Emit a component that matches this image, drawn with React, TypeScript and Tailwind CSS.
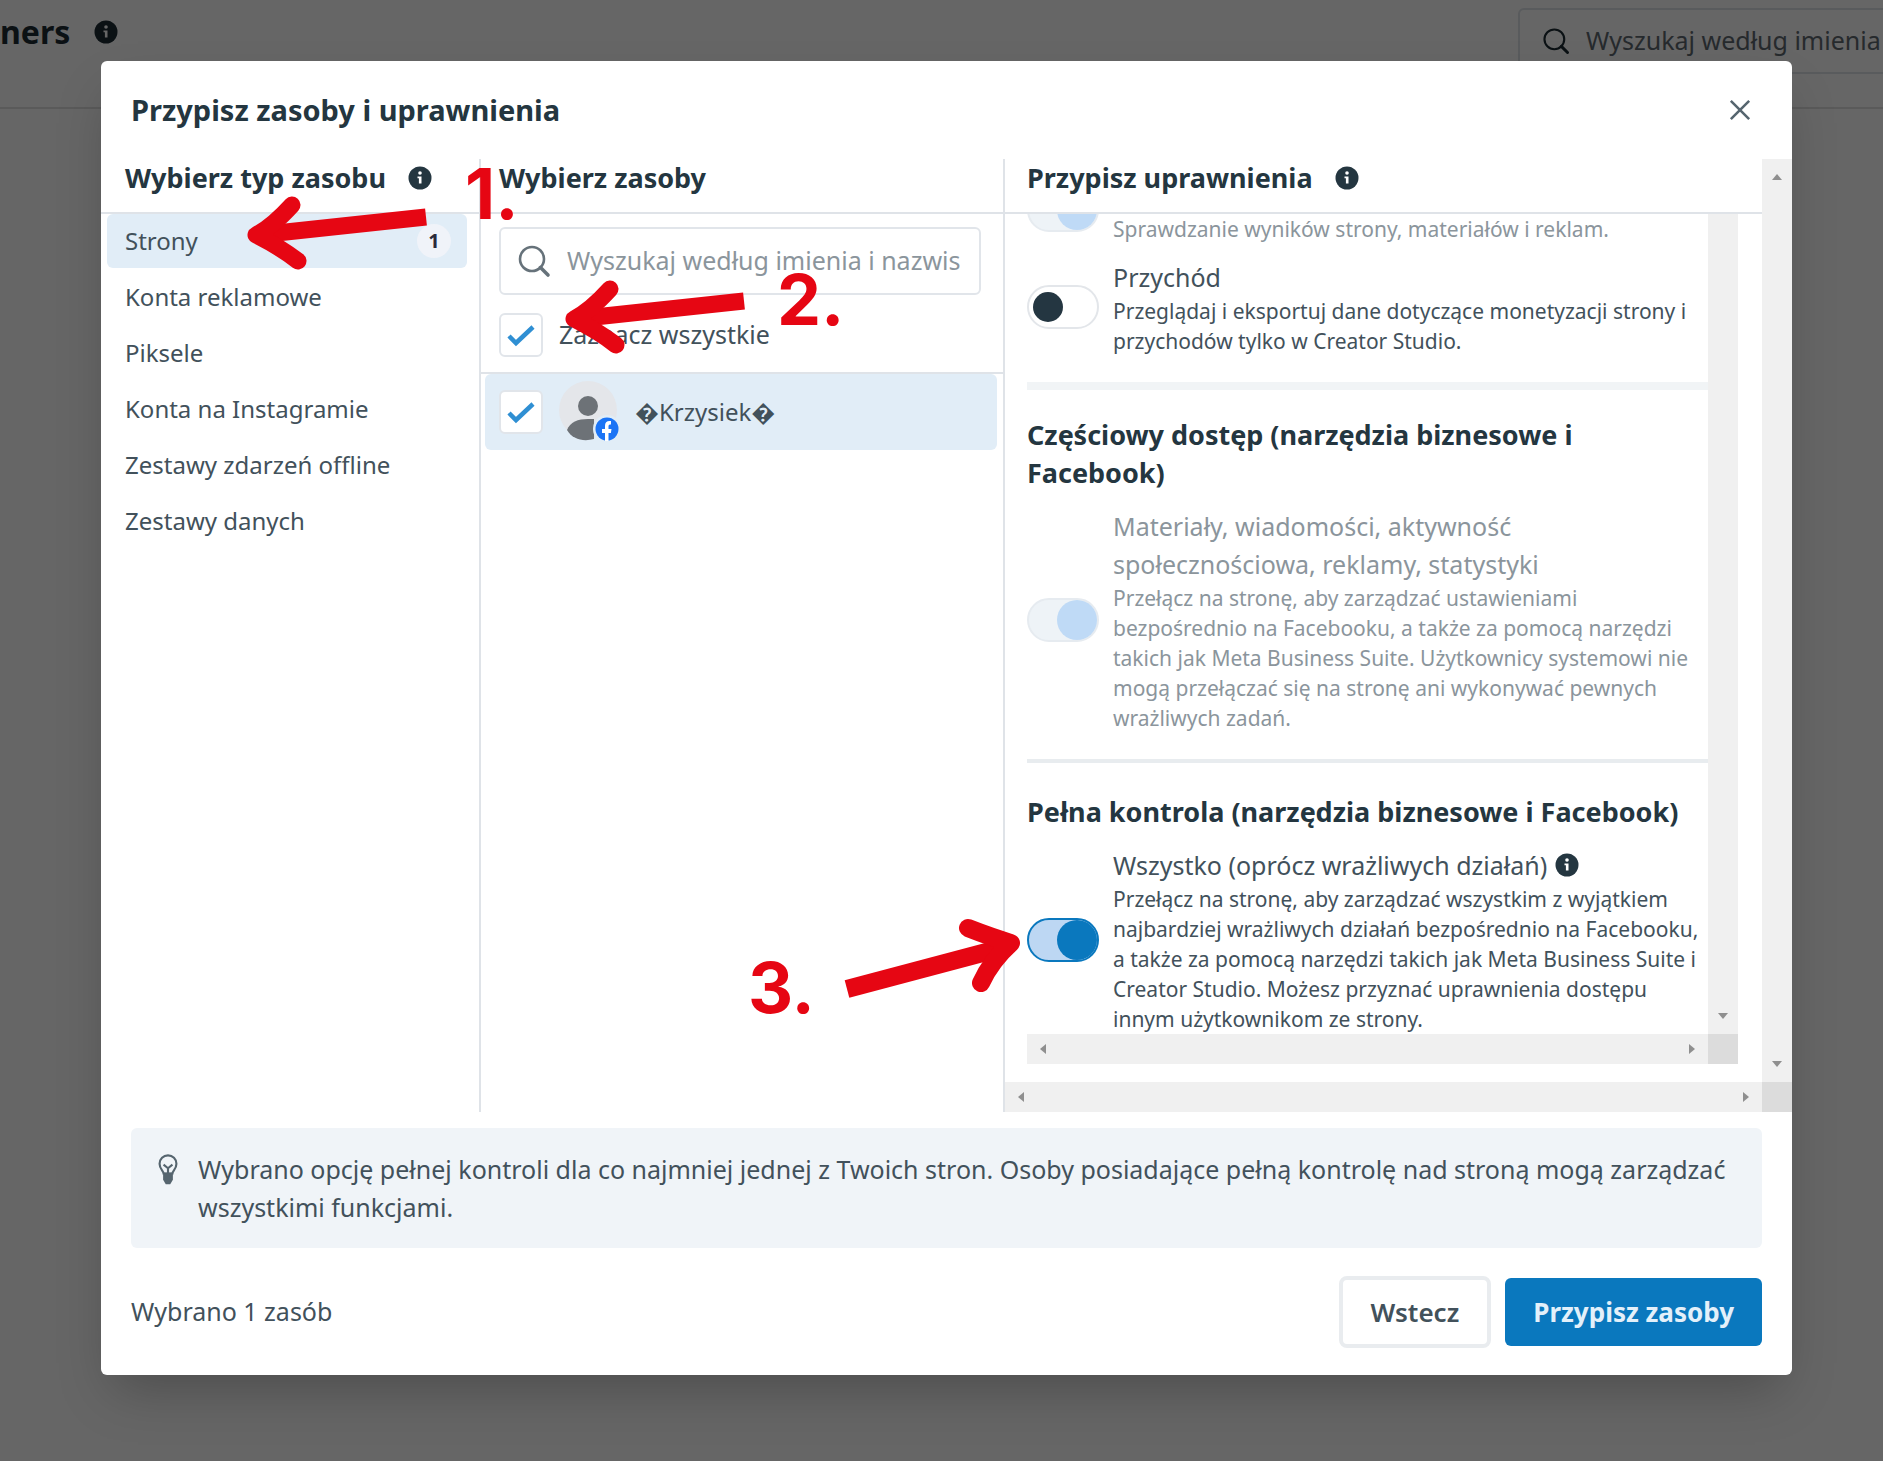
import { useState } from 'react';
import type { ReactNode } from 'react';
import clsx from 'clsx';

const assetTypes = [
  { name: 'Strony', count: 1 },
  { name: 'Konta reklamowe' },
  { name: 'Piksele' },
  { name: 'Konta na Instagramie' },
  { name: 'Zestawy zdarzeń offline' },
  { name: 'Zestawy danych' },
];

function InfoIcon({ className }: { className?: string }) {
  return (
    <svg viewBox="0 0 24 24" className={clsx('h-6 w-6 shrink-0', className)} aria-hidden="true">
      <circle cx="12" cy="12" r="11.5" fill="currentColor" />
      <circle cx="12" cy="7" r="1.8" fill="#fff" />
      <path d="M9.5 10.5h4v7h-2.6v-5.2H9.500z" fill="#fff" />
    </svg>
  );
}

function SearchIcon({ className }: { className?: string }) {
  return (
    <svg viewBox="0 0 34 34" className={className} fill="none" stroke="currentColor" aria-hidden="true">
      <circle cx="15" cy="15" r="12" strokeWidth="2.600" />
      <path d="M23.500 23.500 31 31" strokeWidth="3.600" strokeLinecap="round" />
    </svg>
  );
}

function BulbIcon() {
  return (
    <svg viewBox="0 0 24 36" className="mt-1 h-8 w-6 shrink-0 text-[#56656f]" fill="none" aria-hidden="true">
      <path
        d="M7 22c0-3-4.500-5-4.500-11a9.500 9.500 0 0 1 19 0c0 6-4.500 8-4.500 11z"
        stroke="currentColor"
        strokeWidth="2.400"
      />
      <path d="M7 12l5 4 5-4M12 16v6" stroke="currentColor" strokeWidth="2.400" />
      <path d="M6.500 21h11v8l-3 5h-5l-3-5z" fill="currentColor" />
    </svg>
  );
}

function Avatar() {
  return (
    <svg viewBox="0 0 60 64" className="h-16 w-[60px] shrink-0" aria-hidden="true">
      <circle cx="29" cy="30" r="29" fill="#e4e6ea" />
      <circle cx="29" cy="26" r="10" fill="#6d7277" />
      <path d="M8 50c3-8 11-11 21-11h6v20c-11 3-22 0-27-9z" fill="#6d7277" />
      <circle cx="48" cy="49" r="14" fill="#e1edf7" />
      <circle cx="48" cy="49" r="11.500" fill="#1b74f5" />
      <path
        d="M46 61v-8h-3v-4h3v-3c0-4 2-5.500 6-5v3.500c-2 0-2.500.5-2.500 2V49h3l-.6 4h-2.400v8z"
        fill="#fff"
      />
    </svg>
  );
}

type CheckBoxProps = { id: string; label?: string };

function CheckBox({ id, label }: CheckBoxProps) {
  const [checked, setChecked] = useState(true);
  return (
    <span className="relative flex h-11 w-11 shrink-0">
      <input
        id={id}
        type="checkbox"
        checked={checked}
        aria-label={label}
        onChange={() => setChecked(!checked)}
        className="h-11 w-11 appearance-none rounded-md border-2 border-[#e1e5ea] bg-white"
      />
      {checked && (
        <svg viewBox="0 0 44 44" className="pointer-events-none absolute inset-0" fill="none">
          <path d="M10 23l7 7 17-16" stroke="#2f8fd3" strokeWidth="4.500" />
        </svg>
      )}
    </span>
  );
}

type PermissionProps = {
  title?: ReactNode;
  label: string;
  on?: boolean;
  disabled?: boolean;
  children: ReactNode;
};

function Permission({ title, label, on = false, disabled = false, children }: PermissionProps) {
  const [enabled, setEnabled] = useState(on);
  return (
    <div className="flex shrink-0 items-center gap-[14px]">
      <button
        type="button"
        role="switch"
        aria-checked={enabled}
        aria-label={label}
        disabled={disabled}
        onClick={() => setEnabled(!enabled)}
        className={clsx(
          'flex h-11 w-[72px] shrink-0 items-center rounded-full border-2',
          enabled && 'justify-end',
          !enabled && 'border-[#e3e6ea] bg-white px-1',
          enabled && disabled && 'border-[#e6ebf0] bg-[#eef3f7]',
          enabled && !disabled && 'border-[#0a78be] bg-[#bdd7f3]'
        )}>
        <span
          className={clsx(
            'rounded-full',
            !enabled && 'h-[30px] w-[30px] bg-[#243641]',
            enabled && 'h-10 w-10',
            enabled && disabled && 'bg-[#bfdaf6]',
            enabled && !disabled && 'bg-[#0a78be]'
          )}
        />
      </button>
      <div className={clsx('min-w-0', disabled ? 'text-[#8b959c]' : 'text-[#42515b]')}>
        <div className="min-h-[38px] leading-[38px]">{title}</div>
        <p className="text-[21px] leading-[30px]">{children}</p>
      </div>
    </div>
  );
}

const arrowRotation = {
  up: '',
  right: 'rotate-90',
  down: 'rotate-180',
  left: '-rotate-90',
};

function ScrollArrow({ direction }: { direction: keyof typeof arrowRotation }) {
  return (
    <svg viewBox="0 0 12 12" className={clsx('h-3 w-3', arrowRotation[direction])} aria-hidden="true">
      <path d="M6 3l5 6H1z" fill="#8f8f8f" />
    </svg>
  );
}

function VerticalBar({ withTop = false }: { withTop?: boolean }) {
  return (
    <div className="flex w-[30px] shrink-0 flex-col items-center justify-between bg-[#f0f0f0] py-3">
      <span>{withTop && <ScrollArrow direction="up" />}</span>
      <ScrollArrow direction="down" />
    </div>
  );
}

function HorizontalBar() {
  return (
    <div className="flex h-[30px] shrink-0">
      <div className="flex flex-1 items-center justify-between bg-[#f0f0f0] px-[10px]">
        <ScrollArrow direction="left" />
        <ScrollArrow direction="right" />
      </div>
      <div className="w-[30px] bg-[#dcdcdc]" />
    </div>
  );
}

// Hand-drawn style arrow, pointing left
function LeftArrow({ className }: { className?: string }) {
  return (
    <svg
      viewBox="0 0 190 80"
      className={clsx('pointer-events-none absolute z-20 h-20 w-[190px]', className)}
      fill="none"
      stroke="#e60613"
      strokeWidth="17"
      aria-hidden="true">
      <path d="M184 26 16 44" />
      <path d="M50 14Q30 36 14 44 38 56 56 70" strokeLinecap="round" strokeLinejoin="round" />
    </svg>
  );
}

function StepNumber({ className, children }: { className?: string; children: ReactNode }) {
  return (
    <span
      className={clsx(
        "pointer-events-none absolute z-20 font-['Inter',sans-serif] text-[70px] leading-[70px] font-bold text-[#e60613]",
        className
      )}>
      {children}
    </span>
  );
}

function ColumnHeader({ title, info = false, className }: { title: string; info?: boolean; className?: string }) {
  return (
    <div
      className={clsx(
        'flex h-[55px] shrink-0 items-center gap-[22px] border-b-2 border-[#dfe3e8] pb-4 text-[#243640]',
        className
      )}>
      <h2 className="text-[27px] leading-[38px] font-bold whitespace-nowrap">{title}</h2>
      {info && <InfoIcon />}
    </div>
  );
}

export default function App() {
  const [activeType, setActiveType] = useState('Strony');

  return (
    <div className="relative min-h-screen bg-white font-['Noto_Sans',sans-serif] text-[25px]">
      {/* Page behind the dialog */}
      <header className="flex h-[109px] items-start justify-between overflow-hidden border-b-2 border-[#e2e2e2]">
        <div className="flex items-center gap-6 pt-3 text-[#1c2b33]">
          <h1 className="text-[32px] leading-10 font-bold">ners</h1>
          <InfoIcon />
        </div>
        <div className="mt-2 -mr-[127px] flex h-[66px] items-center gap-4 rounded-md border-2 border-[#dfe3e8] px-[22px]">
          <SearchIcon className="h-7 w-7 text-[#1c2b33]" />
          <input
            type="text"
            aria-label="Wyszukaj"
            placeholder="Wyszukaj według imienia"
            className="w-[400px] placeholder:text-[#5f6a72]"
          />
        </div>
      </header>

      <div className="absolute inset-0 bg-black/60 pt-[61px] pr-[91px] pl-[101px]">
        <div
          role="dialog"
          aria-modal="true"
          aria-labelledby="dialog-title"
          className="rounded-md bg-white text-[#42515b] shadow-2xl">
          <div className="flex h-[98px] items-center justify-between pr-10 pl-[30px]">
            <h1 id="dialog-title" className="text-[29px] font-bold text-[#243640]">
              Przypisz zasoby i uprawnienia
            </h1>
            <button type="button" aria-label="Zamknij" className="p-px">
              <svg viewBox="0 0 24 24" className="h-[22px] w-[22px]" fill="none" stroke="#56656f" strokeWidth="2.800">
                <path d="M2 2l20 20M22 2 2 22" />
              </svg>
            </button>
          </div>

          <div className="flex">
            {/* Asset types */}
            <section className="relative flex w-[380px] shrink-0 flex-col border-r-2 border-[#dfe3e8]">
              <ColumnHeader title="Wybierz typ zasobu" info className="pl-6" />
              <nav className="flex flex-col gap-[2px] pr-3 pl-[6px] text-2xl">
                {assetTypes.map((type) => (
                  <button
                    key={type.name}
                    type="button"
                    onClick={() => setActiveType(type.name)}
                    className={clsx(
                      'flex h-[54px] items-center justify-between rounded-md pr-4 pl-[18px] text-left',
                      activeType === type.name && 'bg-[#e1edf7]'
                    )}>
                    {type.name}
                    {type.count && (
                      <span className="flex h-[34px] w-[34px] items-center justify-center rounded-full bg-[#f0f3f9] text-xl font-bold text-[#2b2b3b]">
                        {type.count}
                      </span>
                    )}
                  </button>
                ))}
              </nav>
              <LeftArrow className="top-8 left-[141px]" />
              <StepNumber className="top-0 left-[364px]">1.</StepNumber>
            </section>

            {/* Assets */}
            <section className="relative flex w-[524px] shrink-0 flex-col border-r-2 border-[#dfe3e8]">
              <ColumnHeader title="Wybierz zasoby" className="pl-[18px]" />
              <div className="border-b-2 border-[#dfe3e8] pt-[13px] pr-[22px] pb-[15px] pl-[18px]">
                <label className="flex h-[68px] items-center gap-4 rounded-md border-2 border-[#e1e5ea] px-4">
                  <SearchIcon className="h-[34px] w-[34px] shrink-0 text-[#66727a]" />
                  <input
                    type="text"
                    aria-label="Wyszukaj zasoby"
                    placeholder="Wyszukaj według imienia i nazwis"
                    className="min-w-0 flex-1 placeholder:text-[#8b959c]"
                  />
                </label>
                <div className="flex items-center gap-4 pt-[18px]">
                  <CheckBox id="select-all" />
                  <label htmlFor="select-all">Zaznacz wszystkie</label>
                </div>
              </div>
              <div className="mr-[6px] ml-1 flex h-[76px] items-center gap-4 rounded-md bg-[#e1edf7] px-[14px]">
                <CheckBox id="asset-1" label="Krzysiek" />
                <Avatar />
                <label htmlFor="asset-1" className="text-2xl">
                  {'\uFFFDKrzysiek\uFFFD'}
                </label>
              </div>
              <LeftArrow className="top-[116px] left-[79px]" />
              <StepNumber className="top-[106px] left-[296px]">2.</StepNumber>
              <StepNumber className="top-[794px] right-[188px]">3.</StepNumber>
              <svg
                viewBox="0 0 190 90"
                className="pointer-events-none absolute top-[752px] -right-6 z-20 h-[90px] w-[190px]"
                fill="none"
                stroke="#e60613"
                strokeWidth="18"
                aria-hidden="true">
                <path d="M10 78 172 35" />
                <path d="M131 17Q154 26 174 32 154 50 144 72" strokeLinecap="round" strokeLinejoin="round" />
              </svg>
            </section>

            {/* Permissions */}
            <section className="flex min-w-0 flex-1 flex-col">
              <div className="flex">
                <div className="min-w-0 flex-1">
                  <ColumnHeader title="Przypisz uprawnienia" info className="pl-[22px]" />
                  <div className="pr-6 pb-[18px] pl-[22px]">
                    <div className="flex h-[820px]">
                      <div className="flex min-w-0 flex-1 flex-col justify-end overflow-hidden">
                        <Permission label="Statystyki" on disabled>
                          Sprawdzanie wyników strony, materiałów i reklam.
                        </Permission>
                        <div className="h-[14px] shrink-0" />
                        <Permission title="Przychód" label="Przychód">
                          Przeglądaj i eksportuj dane dotyczące monetyzacji strony i przychodów tylko w Creator
                          Studio.
                        </Permission>
                        <hr className="my-[26px] h-2 shrink-0 border-0 bg-[#f1f4f6]" />
                        <h3 className="mb-[15px] text-[27px] leading-[38px] font-bold text-[#243640]">
                          Częściowy dostęp (narzędzia biznesowe i Facebook)
                        </h3>
                        <Permission
                          title="Materiały, wiadomości, aktywność społecznościowa, reklamy, statystyki"
                          label="Częściowy dostęp"
                          on
                          disabled>
                          Przełącz na stronę, aby zarządzać ustawieniami bezpośrednio na Facebooku, a także za
                          pomocą narzędzi takich jak Meta Business Suite. Użytkownicy systemowi nie mogą
                          przełączać się na stronę ani wykonywać pewnych wrażliwych zadań.
                        </Permission>
                        <hr className="mt-[26px] mb-[30px] h-1 shrink-0 border-0 bg-[#e8ecef]" />
                        <h3 className="mb-[15px] text-[27px] leading-[38px] font-bold text-[#243640]">
                          Pełna kontrola (narzędzia biznesowe i Facebook)
                        </h3>
                        <Permission
                          title={
                            <span className="flex items-center gap-2">
                              Wszystko (oprócz wrażliwych działań)
                              <InfoIcon className="text-[#243640]" />
                            </span>
                          }
                          label="Pełna kontrola"
                          on>
                          Przełącz na stronę, aby zarządzać wszystkim z wyjątkiem najbardziej wrażliwych działań
                          bezpośrednio na Facebooku, a także za pomocą narzędzi takich jak Meta Business Suite i
                          Creator Studio. Możesz przyznać uprawnienia dostępu innym użytkownikom ze strony.
                        </Permission>
                      </div>
                      <VerticalBar />
                    </div>
                    <HorizontalBar />
                  </div>
                </div>
                <VerticalBar withTop />
              </div>
              <HorizontalBar />
            </section>
          </div>

          <div className="px-[30px] pt-4">
            <div className="flex gap-[18px] rounded-md bg-[#f0f4f8] px-[25px] py-[22px] leading-[38px]">
              <BulbIcon />
              <p>
                Wybrano opcję pełnej kontroli dla co najmniej jednej z Twoich stron. Osoby posiadające pełną
                kontrolę nad stroną mogą zarządzać wszystkimi funkcjami.
              </p>
            </div>
            <div className="flex items-center gap-[14px] pt-7 pb-[27px]">
              <span className="flex-1">Wybrano 1 zasób</span>
              <button
                type="button"
                className="h-[72px] rounded-lg border-4 border-[#e9ecef] px-7 text-[26px] font-semibold">
                Wstecz
              </button>
              <button
                type="button"
                className="h-[68px] rounded-md bg-[#0a78be] px-7 text-[26px] font-bold text-[#e3f0fa]">
                Przypisz zasoby
              </button>
            </div>
          </div>
        </div>
      </div>
    </div>
  );
}
